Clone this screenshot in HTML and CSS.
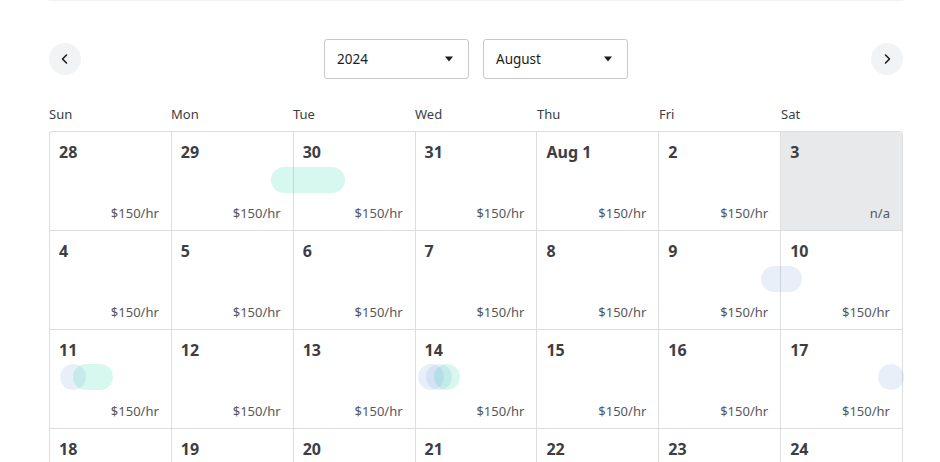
FILE: index.html
```html
<!DOCTYPE html>
<html>
<head>
<meta charset="utf-8">
<link rel="stylesheet" href="styles.css">
</head>
<body>
<div class="page">
  <div class="top-line"></div>
  <div class="nav">
    <button class="circle-btn" aria-label="Previous month">
      <svg width="12" height="12" viewBox="0 0 12 12"><path d="M7.5 2 L3.5 6 L7.5 10" fill="none" stroke="#1b1d21" stroke-width="1.6" stroke-linecap="round" stroke-linejoin="round"/></svg>
    </button>
    <div class="selects">
      <div class="select"><span>2024</span><svg width="10" height="6" viewBox="0 0 10 6"><path d="M1 0.5 H9 L5 5.5 Z" fill="#1b1d21"/></svg></div>
      <div class="select"><span>August</span><svg width="10" height="6" viewBox="0 0 10 6"><path d="M1 0.5 H9 L5 5.5 Z" fill="#1b1d21"/></svg></div>
    </div>
    <button class="circle-btn" aria-label="Next month">
      <svg width="12" height="12" viewBox="0 0 12 12"><path d="M4.5 2 L8.5 6 L4.5 10" fill="none" stroke="#1b1d21" stroke-width="1.6" stroke-linecap="round" stroke-linejoin="round"/></svg>
    </button>
  </div>
  <div class="weekdays">
    <div>Sun</div><div>Mon</div><div>Tue</div><div>Wed</div><div>Thu</div><div>Fri</div><div>Sat</div>
  </div>
  <div class="grid">
    <div class="cell"><span class="num">28</span><span class="price">$150/hr</span></div>
    <div class="cell"><span class="num">29</span><span class="price">$150/hr</span></div>
    <div class="cell"><span class="num">30</span><span class="price">$150/hr</span></div>
    <div class="cell"><span class="num">31</span><span class="price">$150/hr</span></div>
    <div class="cell"><span class="num">Aug 1</span><span class="price">$150/hr</span></div>
    <div class="cell"><span class="num">2</span><span class="price">$150/hr</span></div>
    <div class="cell off"><span class="num">3</span><span class="price">n/a</span></div>

    <div class="cell"><span class="num">4</span><span class="price">$150/hr</span></div>
    <div class="cell"><span class="num">5</span><span class="price">$150/hr</span></div>
    <div class="cell"><span class="num">6</span><span class="price">$150/hr</span></div>
    <div class="cell"><span class="num">7</span><span class="price">$150/hr</span></div>
    <div class="cell"><span class="num">8</span><span class="price">$150/hr</span></div>
    <div class="cell"><span class="num">9</span><span class="price">$150/hr</span></div>
    <div class="cell"><span class="num">10</span><span class="price">$150/hr</span></div>

    <div class="cell"><span class="num">11</span><span class="price">$150/hr</span></div>
    <div class="cell"><span class="num">12</span><span class="price">$150/hr</span></div>
    <div class="cell"><span class="num">13</span><span class="price">$150/hr</span></div>
    <div class="cell"><span class="num">14</span><span class="price">$150/hr</span></div>
    <div class="cell"><span class="num">15</span><span class="price">$150/hr</span></div>
    <div class="cell"><span class="num">16</span><span class="price">$150/hr</span></div>
    <div class="cell"><span class="num">17</span><span class="price">$150/hr</span></div>

    <div class="cell"><span class="num">18</span><span class="price">$150/hr</span></div>
    <div class="cell"><span class="num">19</span><span class="price">$150/hr</span></div>
    <div class="cell"><span class="num">20</span><span class="price">$150/hr</span></div>
    <div class="cell"><span class="num">21</span><span class="price">$150/hr</span></div>
    <div class="cell"><span class="num">22</span><span class="price">$150/hr</span></div>
    <div class="cell"><span class="num">23</span><span class="price">$150/hr</span></div>
    <div class="cell"><span class="num">24</span><span class="price">$150/hr</span></div>

    <span class="mark teal" style="left:221px;top:35px;width:74px"></span>
    <span class="mark blue" style="left:711px;top:134px;width:41px"></span>
    <span class="mark blue" style="left:10px;top:232px;width:26px"></span>
    <span class="mark teal" style="left:23px;top:232px;width:40px"></span>
    <span class="mark blue" style="left:368px;top:232px;width:26px"></span>
    <span class="mark blue" style="left:376px;top:232px;width:26px"></span>
    <span class="mark teal" style="left:384px;top:232px;width:26px"></span>
    <span class="mark blue" style="left:828px;top:232px;width:26px"></span>
  </div>
</div>
</body>
</html>
```

FILE: styles.css
```css
* { box-sizing: border-box; }
html, body { margin: 0; padding: 0; background: #fff; }
body {
  font-family: "Noto Sans", "Liberation Sans", sans-serif;
  color: #1b1d21;
  height: 462px;
  overflow: hidden;
}
.page {
  width: 854px;
  margin-left: 49px;
}
.top-line {
  height: 1px;
  background: #f1f2f3;
}
.nav {
  display: flex;
  justify-content: space-between;
  align-items: center;
  margin-top: 38px;
  height: 40px;
}
.circle-btn {
  width: 32px;
  height: 32px;
  border-radius: 50%;
  border: none;
  background: #f2f3f5;
  display: flex;
  align-items: center;
  justify-content: center;
  padding: 0;
}
.selects {
  display: flex;
  gap: 14px;
}
.select {
  width: 145px;
  height: 40px;
  border: 1px solid #c6c8cc;
  border-radius: 3px;
  display: flex;
  align-items: center;
  justify-content: space-between;
  padding: 0 14px 0 12px;
  font-size: 13.5px;
  color: #1b1d21;
}
.weekdays {
  display: grid;
  grid-template-columns: repeat(7, 1fr);
  margin-top: 26px;
  height: 22px;
  font-size: 13px;
  color: #3c3e43;
}
.grid {
  position: relative;
  margin-top: 4px;
  display: grid;
  grid-template-columns: repeat(7, 1fr);
  border-top: 1px solid #dcdddf;
  border-left: 1px solid #dcdddf;
  border-top-left-radius: 4px;
  border-top-right-radius: 4px;
}
.cell {
  height: 99px;
  border-right: 1px solid #dcdddf;
  border-bottom: 1px solid #dcdddf;
  display: flex;
  flex-direction: column;
  justify-content: space-between;
  padding: 10px 12px 9px 9px;
}
.cell:nth-child(7) { border-top-right-radius: 4px; }
.cell.off { background: #e8e9eb; }
.num {
  font-size: 16px;
  font-weight: 700;
  color: #3c3e43;
  line-height: 20px;
}
.price {
  align-self: flex-end;
  font-size: 13px;
  color: #55575c;
  line-height: 16px;
}
.mark {
  position: absolute;
  height: 26px;
  border-radius: 13px;
}
.mark.teal { background: rgba(40, 220, 170, 0.19); }
.mark.blue { background: rgba(120, 160, 220, 0.17); }
```
